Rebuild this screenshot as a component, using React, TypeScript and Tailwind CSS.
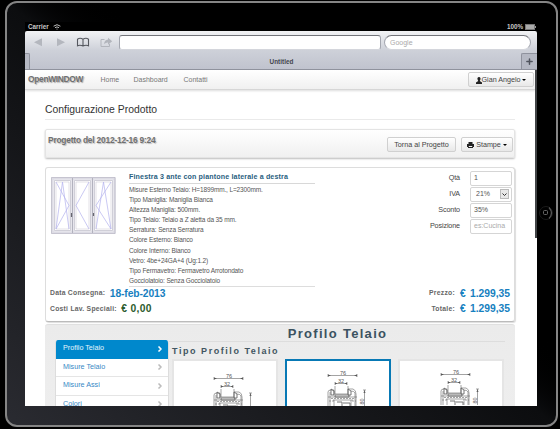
import React from "react";
import { ChevronRight, Plus } from "lucide-react";

const details = [
  "Misure Esterno Telaio: H=1899mm., L=2300mm.",
  "Tipo Maniglia: Maniglia Bianca",
  "Altezza Maniglia: 500mm.",
  "Tipo Telaio: Telaio a Z aletta da 35 mm.",
  "Serratura: Senza Serratura",
  "Colore Esterno: Bianco",
  "Colore Interno: Bianco",
  "Vetro: 4be+24GA+4 (Ug:1.2)",
  "Tipo Fermavetro: Fermavetro Arrotondato",
  "Gocciolatoio: Senza Gocciolatoio",
];

const button =
  "flex h-[15px] items-center justify-center rounded-[2px] border border-[#d0d0d0] bg-linear-to-b from-white to-[#e8e8e8] pt-[1px] text-[7.2px] tracking-[-0.02px] text-[#444]";

function Caret() {
  return <span className="ml-[2px] border-x-[2px] border-t-[2.5px] border-x-transparent border-t-black" />;
}

function StatusBar() {
  return (
    <div className="flex h-[9px] items-center bg-black pt-[1px] pr-[1px] pl-[3px] text-[6.3px] leading-none font-bold text-[#c8c8c8]">
      <span>Carrier</span>
      <svg className="ml-[4px] h-[6px] w-[8px]" viewBox="0 0 8 6" fill="none" stroke="#bbb" strokeWidth="1">
        <path d="M0.6 2.2Q4-.8 7.4 2.2M2 3.7Q4 2.1 6 3.7" />
        <circle cx="4" cy="5" r=".6" fill="#bbb" stroke="none" />
      </svg>
      <span className="ml-auto">100%</span>
      <svg className="ml-[2px] h-[6px] w-[11px]" viewBox="0 0 11 6">
        <rect x=".5" y=".5" width="9" height="5" fill="#aaa" stroke="#777" />
        <rect x="10" y="2" width="1" height="2" fill="#999" />
      </svg>
    </div>
  );
}

function BrowserBar() {
  return (
    <div className="flex h-[39px] flex-col rounded-t-[2px] border-b border-[#8f929d] bg-linear-to-b from-[#f2f3f5] via-[#ced1d9] to-[#c0c3ce]">
      <div className="flex h-[22px] items-start pt-[4px]">
        <svg className="h-[15px] w-[94px]" viewBox="-1 0 94 15" fill="none">
          <path d="M16 3.2v8L8 7.2zM31 3.2v8l8-4z" fill="#b4b7be" />
          <path
            d="M57 4.2Q54 2.4 51.5 4.2v6.6Q54 9.6 57 11Q60 9.6 62.5 10.8V4.2Q60 2.4 57 4.2zM57 4.2V11"
            stroke="#55585f"
            strokeWidth="1.1"
          />
          <path d="M78.500 4.500h-3.500v7h8.500V9" stroke="#b2b5bc" strokeWidth="1" />
          <path d="M78 9Q78.500 5 82 4.600V2.700l4.200 3.500L82 9.700V7.400Q80 7.300 78 9z" fill="#b2b5bc" />
        </svg>
        <div className="h-[15px] w-[262px] rounded-[3px] border border-t-[#73757b] border-x-[#a4a7b0] border-b-[#d4d6dc] bg-white" />
        <div className="ml-[3px] flex h-[15px] w-[147px] items-center rounded-full border border-t-[#73757b] border-x-[#a4a7b0] border-b-[#d4d6dc] bg-white pt-[1px] pl-[5px] text-[7px] text-[#aaa]">
          Google
        </div>
      </div>
      <div className="flex flex-1 items-stretch">
        <div className="w-[5px] rounded-tr-[2px] border-t border-r border-[#8f929d] bg-[#b6b9c4]" />
        <div className="flex flex-1 items-center justify-center pt-[1px] pl-[12px] text-[6.4px] font-bold text-[#44464d]">Untitled</div>
        <div className="flex w-[16px] items-center justify-center rounded-tl-[2px] border-t border-l border-[#8f929d] bg-[#b5b8c3]">
          <Plus className="size-[9px] text-[#50535d]" strokeWidth={4} />
        </div>
      </div>
    </div>
  );
}

function NavBar() {
  return (
    <div className="flex h-[20px] items-center border-b border-[#d6d6d6] bg-linear-to-b from-white to-[#f0f0f0] pr-[1px] pl-[3px] text-[7px] text-[#777] shadow-[0_1px_2px_#ddd]">
      <span className="w-[72.5px] text-[8.4px] font-bold tracking-[-0.3px] text-[#707070] [text-shadow:1px_1px_1px_#aaa]">OpenWINDOW</span>
      <span className="w-[33px] pt-[1px]">Home</span>
      <span className="w-[50px] pt-[1px]">Dashboard</span>
      <span className="pt-[1px]">Contatti</span>
      <div className={button + " ml-auto w-[66px]"}>
        <svg className="h-[7px] w-[6px]" viewBox="0 0 6 7" fill="#222">
          <path d="M3 0C1.7 0 1.2 1 1.5 2.3L2.2 4 0 5.5V7h6V5.500L3.8 4l.7-1.7C4.8 1 4.3 0 3 0z" />
        </svg>
        <span>Gian Angelo</span>
        <Caret />
      </div>
    </div>
  );
}

function WindowDrawing() {
  return (
    <svg className="h-[57px] w-[65px]" viewBox="0 0 65 57" fill="none">
      <path d="M1.500 1.500h62v54h-62zM21.500 1v55M41.500 1v55" stroke="#dddce5" strokeWidth="2.4" />
      <path d="M.5.5h63.500v56H.5zM3.500 3.500h16v50h-16zM23.500 3.500h16v50h-16zM43.500 3.500h18v50h-18z" stroke="#b0afbd" strokeWidth=".6" />
      <path d="M5 5h13v47H5zM25 5h13v47H25zM45 5h15v47H45z" stroke="#c4c3cf" strokeWidth=".5" />
      <path d="M5 52L11.500 5l6.500 47M5 5l13 23.500L5 52M38 5L25 28.500 38 52M45 52L52.500 5 60 52M60 5L45 28.500 60 52" stroke="#b3b2ee" strokeWidth=".7" />
      <path d="M21.500 1v55M41.500 1v55" stroke="#9696a3" strokeWidth=".6" />
      <path d="M20.500 36v4M42.500 36v3" stroke="#66666f" strokeWidth="1.2" />
    </svg>
  );
}

function Field({ label, value, kind }: { label: string; value: string; kind?: "select" | "placeholder" }) {
  return (
    <div className="flex h-[16px] items-center justify-end">
      <span className="mr-[10px] pt-[1px] text-[7.2px] tracking-[-0.12px] text-[#444]">{label}</span>
      <div
        className={
          "flex h-[15px] w-[42px] items-center justify-between rounded-[2px] border border-[#d5d5d5] bg-white pt-[1px] pl-[3px] text-[7px] " +
          (kind === "placeholder" ? "text-[#aaa]" : "text-[#555]")
        }
      >
        <span className={kind === "select" ? "pl-[2px]" : ""}>{value}</span>
        {kind === "select" && (
          <span className="mr-[2px] mb-[1px] flex h-[10px] w-[9px] items-center justify-center border border-[#bbb] bg-[#e8e8e8]">
            <svg className="size-[5px]" viewBox="0 0 5 5" fill="none" stroke="#333">
              <path d="M.5 1.500l2 2 2-2" />
            </svg>
          </span>
        )}
      </div>
    </div>
  );
}

function Totals({ a, av, tone, b }: { a: string; av: string; tone: string; b: string }) {
  return (
    <div className="flex h-[15.5px] items-center pr-[4px] pl-[4px] text-[6.8px] font-bold tracking-[0.25px] whitespace-nowrap text-[#666]">
      <span>{a}</span>
      <span className={"ml-[4.500px] text-[10.3px] " + tone}>{av}</span>
      <span className="ml-auto">{b}</span>
      <span className="ml-[5px] flex w-[50px] justify-between text-[10.3px] tracking-normal text-[#1680c0]">
        <span>€</span>
        <span>1.299,35</span>
      </span>
    </div>
  );
}

function ProductCard() {
  return (
    <div className="mt-[9px] flex h-[155px] flex-col rounded-[3px] border border-t-[#ddd] border-r-[#ddd] border-b-[#bbb] border-l-[#ddd] bg-white shadow-[1px_1px_1px_#ddd]">
      <div className="flex h-[117.500px]">
        <div className="w-[83px] pt-[9px] pl-[5px]">
          <WindowDrawing />
        </div>
        <div className="w-[186px]">
          <div className="flex h-[16px] items-end border-b border-[#d8d8d8] pb-[1px] text-[7.1px] leading-[10px] font-bold tracking-[0.15px] whitespace-nowrap text-[#286080]">
            Finestra 3 ante con piantone laterale a destra
          </div>
          <div className="h-[103px] border-b border-[#ddd]">
            {details.map((line) => (
              <div key={line} className="h-[10.100px] text-[6.5px] leading-[12.500px] tracking-[-0.14px] whitespace-nowrap text-[#555]">
                {line}
              </div>
            ))}
          </div>
        </div>
        <div className="ml-auto pt-[2px] pr-[2px]">
          <Field label="Qtà" value="1" />
          <Field label="IVA" value="21%" kind="select" />
          <Field label="Sconto" value="35%" />
          <Field label="Posizione" value="es:Cucina" kind="placeholder" />
        </div>
      </div>
      <Totals a="Data Consegna:" av="18-feb-2013" tone="text-[#1680c0] tracking-[-0.1px]" b="Prezzo:" />
      <Totals a="Costi Lav. Speciali:" av="€ 0,00" tone="text-[#2b5b2d] tracking-[0.3px]" b="Totale:" />
    </div>
  );
}

function ProfileDrawing({ height = true }: { height?: boolean }) {
  return (
    <svg className="h-[36px] w-[42px] shrink-0" viewBox="0 0 42 36" fill="none" stroke="#666" strokeWidth=".6">
      <path d="M1 5.500h29M1 4v3M30 4v3M8 13.500h12M8 12v3M20 12v3" />
      <path d="M1 4.500v2l3-1zM30 4.500v2l-3-1zM8 12.500v2l2.500-1zM20 12.500v2l-2.500-1zM37.500 20l-1 3h2z" fill="#555" stroke="none" />
      <g fill="#555" stroke="none" fontSize="5.500">
        <text x="13" y="4.500">76</text>
        <text x="11" y="12.500">32</text>
        {height && (
          <text x="36.500" y="34.500" transform="rotate(-90 36.500 34.500)">
            80
          </text>
        )}
      </g>
      <path d="M37.500 20v16M36 20h3" />
      <path d="M8 16v8h13v-8M1 36V22q0-2 3-2h3v5M3 36V22M21 19h5q3 1 3 5v12M28 36V23q-1-2-4-2M1 27h29M6 30h20M7 36v-6M24 36v-6" />
      <path d="M4 19l3 2v4H4zM21 19l3 2v4h-3zM8 25h14v2H8zM10 32h5v4M16 33h7v3" strokeWidth=".9" />
      <path d="M4 28.500h23M2 31h5M25 31h4" strokeDasharray="2 1" />
    </svg>
  );
}

function ProfileSection() {
  return (
    <div className="mt-[2px] flex h-[84px] flex-col overflow-hidden rounded-t-[3px] border-t border-[#e0e0e0] bg-linear-to-b from-[#ebebeb] to-[#eee]">
      <div className="flex px-[10px]">
        <div className="mt-[15px] h-[80px] w-[114px] shrink-0 overflow-hidden rounded-t-[3px] border-x border-[#ddd] bg-white text-[7.2px] text-[#3788c5]">
          {["Profilo Telaio", "Misure Telaio", "Misure Assi", "Colori"].map((item, i) => (
            <div
              key={item}
              className={
                "flex items-center justify-between border-b pr-[4px] pl-[7px] " +
                (i === 0 ? "h-[18.500px] border-[#0088cc] bg-[#0088cc] text-[#e3f4fc]" : "h-[18.5px] border-[#e5e5e5]")
              }
            >
              <span>{item}</span>
              <ChevronRight className={"size-[8px] " + (i === 0 ? "text-white" : "text-[#bbb]")} strokeWidth={5} />
            </div>
          ))}
        </div>
        <div className="w-[336px] shrink-0">
          <div className="h-[17px] border-b border-[#ddd] pl-[1px] text-center text-[13px] leading-[18px] font-bold tracking-[1.3px] text-[#3b5260]">
            Profilo Telaio
          </div>
          <div className="h-[17px] pl-[3px] text-[9px] leading-[19px] font-bold tracking-[1.55px] text-[#425661]">Tipo Profilo Telaio</div>
          <div className="flex gap-[7px] pl-[3px]">
            <div className="flex h-[80px] w-[106px] border-2 border-[#e5e5e5] bg-white pt-[12px] pl-[39px]">
              <ProfileDrawing height={false} />
            </div>
            <div className="flex h-[80px] w-[106px] border-2 border-[#0879b5] bg-white pt-[9px] pl-[40px]">
              <ProfileDrawing />
            </div>
            <div className="flex h-[80px] w-[106px] border-2 border-[#e5e5e5] bg-white pt-[8px] pl-[40px]">
              <ProfileDrawing />
            </div>
          </div>
        </div>
      </div>
    </div>
  );
}

export default function App() {
  return (
    <div className="h-[429px] w-[560px] overflow-hidden bg-black pt-[1px] pl-[5px] font-['Liberation_Sans',Arial,sans-serif]">
      <div className="h-[426px] w-[553px] rounded-[12px] border-2 border-[#858585] bg-linear-to-tr from-[#2a2b31] via-[#0c0d0f] via-50% to-black to-60%">
        <div className="flex">
          <div className="ml-[18px] w-[512px] pt-[19px]">
            <StatusBar />
            <BrowserBar />
            <div className="flex h-[336px] bg-white">
              <div className="h-full w-[510px] overflow-hidden bg-white">
                <NavBar />
                <div className="w-[490px] pl-[20px]">
                  <div className="flex h-[30px] items-end border-b border-[#eaeaea] pb-[2px] text-[10.4px] text-[#333]">
                    <span className="leading-[15px]">Configurazione Prodotto</span>
                  </div>
                  <div className="mt-[9px] flex h-[29px] items-center rounded-[2px] border border-[#e4e4e4] bg-linear-to-b from-white to-[#f0f0f0] pt-[2px] pr-[1px] pl-[2px] shadow-[0_1px_2px_#bbb]">
                    <span className="mb-[9px] text-[8.4px] font-bold tracking-[-0.2px] text-[#707070] [text-shadow:1px_1px_1px_#bbb]">
                      Progetto del 2012-12-16 9:24
                    </span>
                    <div className={button + " ml-auto w-[69px]"}>Torna al Progetto</div>
                    <div className={button + " ml-[5px] w-[52px]"}>
                      <svg className="mr-[2px] h-[6px] w-[7px]" viewBox="0 0 7 6" fill="#222">
                        <path d="M1.500 0h4v2H7v3H6v1H1V5H0V2h1.500zM1.800 4v1h3.400V4z" />
                      </svg>
                      Stampe
                      <Caret />
                    </div>
                  </div>
                  <ProductCard />
                  <ProfileSection />
                </div>
              </div>
              <div className="h-[168px] w-[2px] bg-[#414346]" />
            </div>
          </div>
          <svg className="mt-[202px] ml-[1px] h-[16px] w-[16px]" viewBox="0 0 16 16" fill="none">
            <circle cx="8" cy="8" r="6.500" stroke="#1a1a1a" />
            <path d="M11 2.500Q16 8 11 13.500" stroke="#555" strokeWidth="1.300" />
            <rect x="5.500" y="5.500" width="4" height="4" rx="1" stroke="#666" />
          </svg>
        </div>
      </div>
    </div>
  );
}
